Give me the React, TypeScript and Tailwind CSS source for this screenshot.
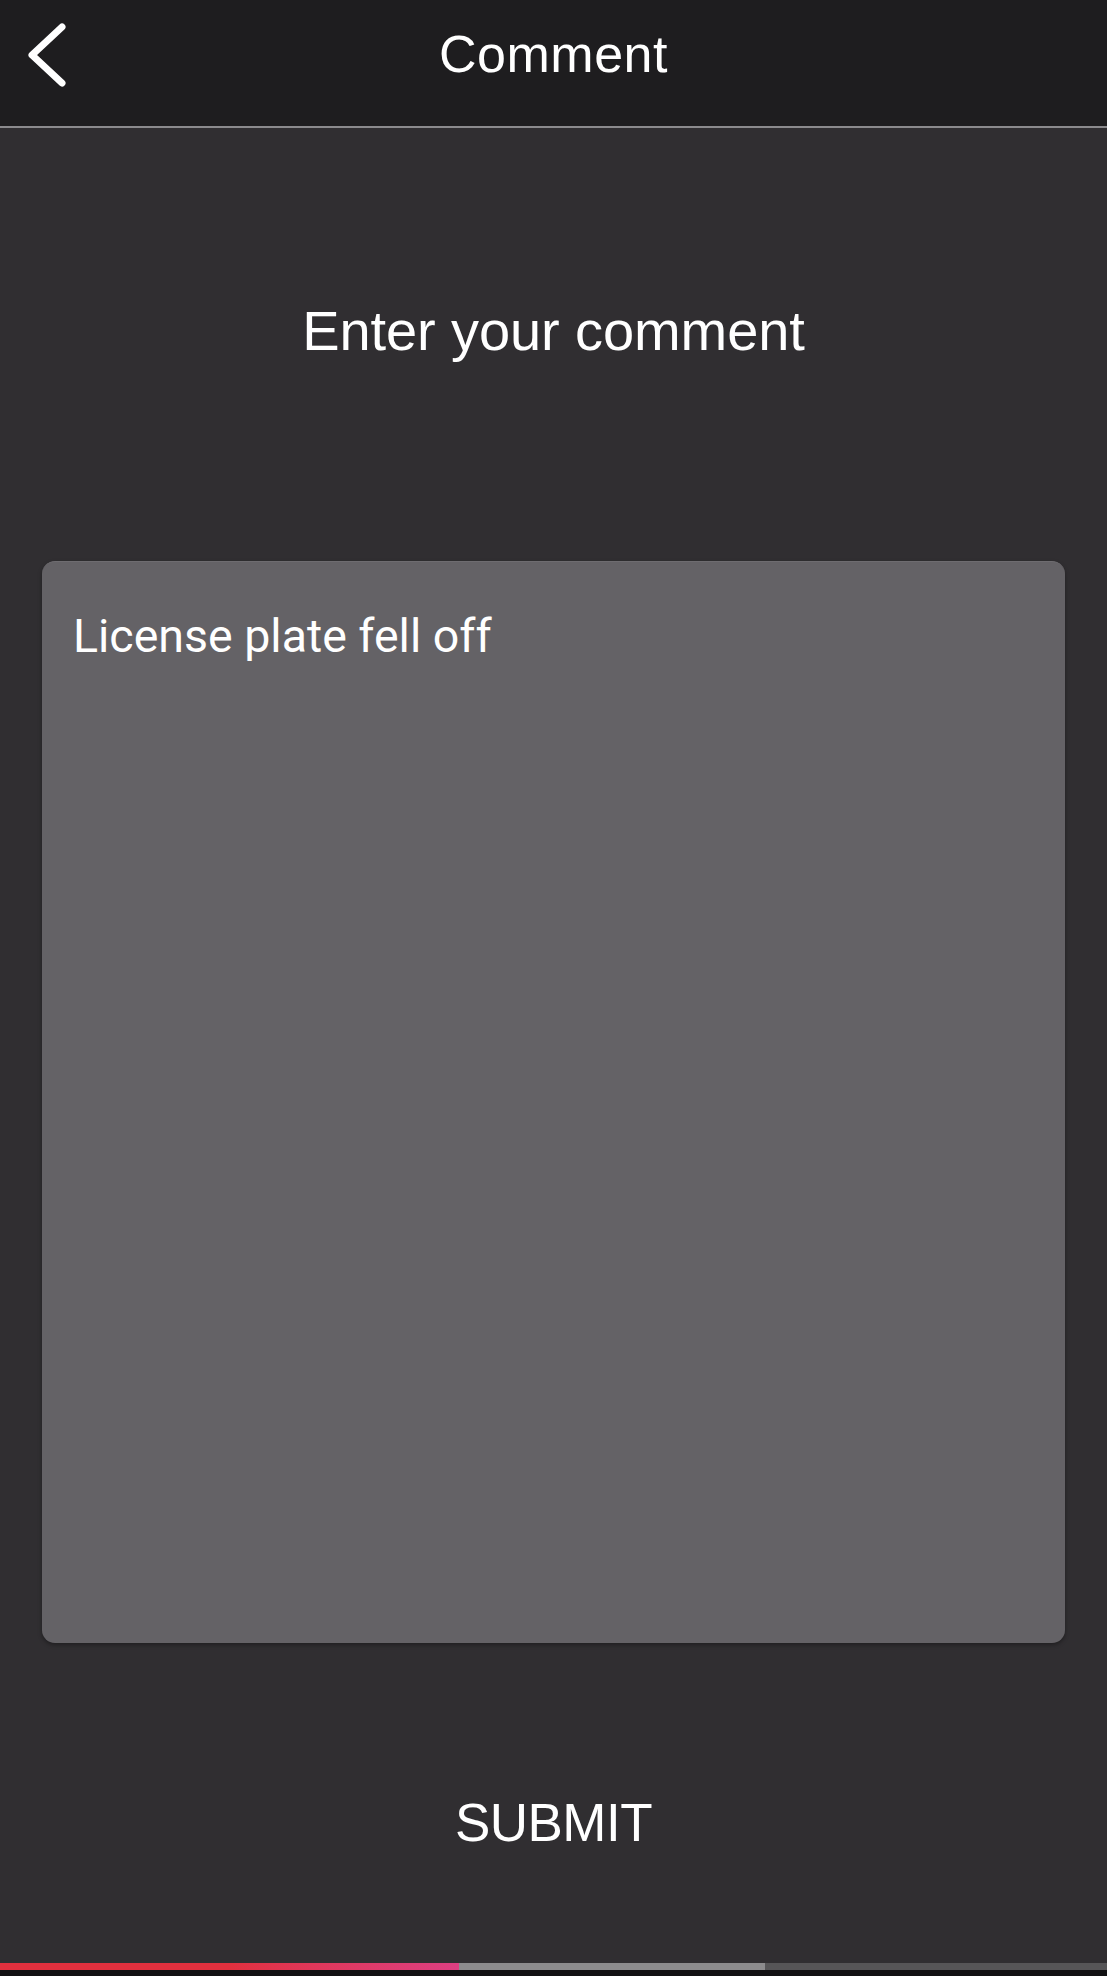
import React, {useState} from 'react';

const BackChevron = () => (
    <svg width="42" height="66" viewBox="0 0 42 66" fill="none">
        <path d="M36 5 L6 33 L36 61" stroke="#ffffff" strokeWidth="7" strokeLinecap="round" strokeLinejoin="round" />
    </svg>
);

const App = () => {
    const [comment, setComment] = useState('License plate fell off');

    return (
        <div className="h-[1976px] w-full flex flex-col bg-[#302e31] text-white" style={{fontFamily: '"Liberation Sans", Arial, sans-serif'}}>
            {/* header */}
            <header className="h-[128px] shrink-0 grid grid-cols-[1fr_auto_1fr] bg-[#1e1d1f] border-b-2 border-[#8b8a8d]">
                <div className="pl-[26px] pt-[22px]">
                    <button type="button" className="block" aria-label="Back">
                        <BackChevron />
                    </button>
                </div>
                <h1 className="pt-[28px] text-[52px] leading-none font-normal tracking-[0.5px]">Comment</h1>
                <div />
            </header>

            {/* body */}
            <main className="flex flex-col items-center">
                <h2 className="mt-[175px] text-[56px] leading-none font-normal tracking-[-0.1px]">Enter your comment</h2>

                <div className="mt-[202px] w-[1023px] h-[1082px] rounded-[13px] bg-[#646266] shadow-[0_2px_4px_rgba(0,0,0,0.35)] border-t border-[#6e6c70]">
                    <textarea
                        value={comment}
                        onChange={(e) => setComment(e.target.value)}
                        className="w-full h-full resize-none bg-transparent outline-none pt-[51px] pl-[31px] pr-[30px] text-[46.5px] leading-none text-white"
                        style={{fontFamily: 'Roboto, "Liberation Sans", sans-serif'}}
                    />
                </div>

                <button type="button" className="mt-[153px] text-[53px] leading-none font-normal tracking-[-0.5px]">
                    SUBMIT
                </button>
            </main>

            {/* progress bar */}
            <div className="mt-auto shrink-0 h-[13px] flex flex-col">
                <div className="h-[7px] flex">
                    <div className="w-[459px] bg-gradient-to-r from-[#e2303e] via-[#e2303e] to-[#dd3f82]" />
                    <div className="w-[306px] bg-[#8c8b8d]" />
                    <div className="flex-1 bg-[#565557]" />
                </div>
                <div className="flex-1 bg-[#111012]" />
            </div>
        </div>
    );
};

export default App;
